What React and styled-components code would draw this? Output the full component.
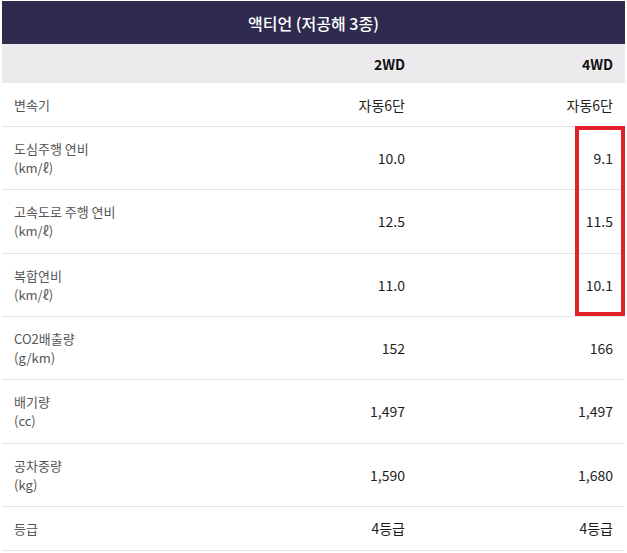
import React from "react";
import styled, { createGlobalStyle } from "styled-components";

const GlobalStyle = createGlobalStyle`
	html, body {
		margin: 0;
		padding: 0;
		background: #fff;
	}
	body {
		font-family: "Noto Sans CJK KR", "Noto Sans", sans-serif;
		color: #222;
	}
`;

const rows = [
	{ label: ["변속기"], a: "자동6단", b: "자동6단" },
	{ label: ["도심주행 연비", "(km/ℓ)"], a: "10.0", b: "9.1" },
	{ label: ["고속도로 주행 연비", "(km/ℓ)"], a: "12.5", b: "11.5" },
	{ label: ["복합연비", "(km/ℓ)"], a: "11.0", b: "10.1" },
	{ label: ["CO2배출량", "(g/km)"], a: "152", b: "166" },
	{ label: ["배기량", "(cc)"], a: "1,497", b: "1,497" },
	{ label: ["공차중량", "(kg)"], a: "1,590", b: "1,680" },
	{ label: ["등급"], a: "4등급", b: "4등급" },
];

const App = () => {
	return (
		<>
			<GlobalStyle />
			<Wrap>
				<Title>액티언 (저공해 3종)</Title>
				<HeadRow>
					<Cell />
					<HeadCell>2WD</HeadCell>
					<HeadCell>4WD</HeadCell>
				</HeadRow>
				<Body>
					{rows.map((r) => (
						<Row key={r.label[0]} $tall={r.label.length > 1}>
							<Label>
								{r.label.map((l) => (
									<span key={l}>{l}</span>
								))}
							</Label>
							<Value>{r.a}</Value>
							<Value>{r.b}</Value>
						</Row>
					))}
					<Highlight />
				</Body>
			</Wrap>
		</>
	);
};

const Wrap = styled.div`
	width: 623px;
	padding: 1px 2px 0;
`;

const Title = styled.div`
	height: 43px;
	background: #2e2b4e;
	color: #fff;
	font-size: 16px;
	font-weight: 500;
	display: flex;
	align-items: center;
	justify-content: center;
`;

const HeadRow = styled.div`
	display: grid;
	grid-template-columns: 208px 207px 208px;
	height: 39px;
	background: #ebebee;
`;

const Cell = styled.div`
	display: flex;
	align-items: center;
	padding: 0 12px;
`;

const HeadCell = styled(Cell)`
	justify-content: flex-end;
	font-size: 14px;
	font-weight: 700;
	color: #111;
`;

const Body = styled.div`
	position: relative;
`;

const Row = styled.div`
	display: grid;
	grid-template-columns: 208px 207px 208px;
	height: ${(p) => (p.$tall ? "62.34px" : "43px")};
	border-bottom: 1px solid #e4e4e6;
`;

const Label = styled(Cell)`
	flex-direction: column;
	align-items: flex-start;
	justify-content: center;
	font-size: 13px;
	line-height: 19px;
	color: #555;
`;

const Value = styled(Cell)`
	justify-content: flex-end;
	font-size: 14px;
	font-weight: 400;
	color: #1e1e1e;
`;

const Highlight = styled.div`
	position: absolute;
	top: 43px;
	right: 0;
	width: 42px;
	height: 182px;
	border: 4px solid #e3202a;
`;

export default App;
